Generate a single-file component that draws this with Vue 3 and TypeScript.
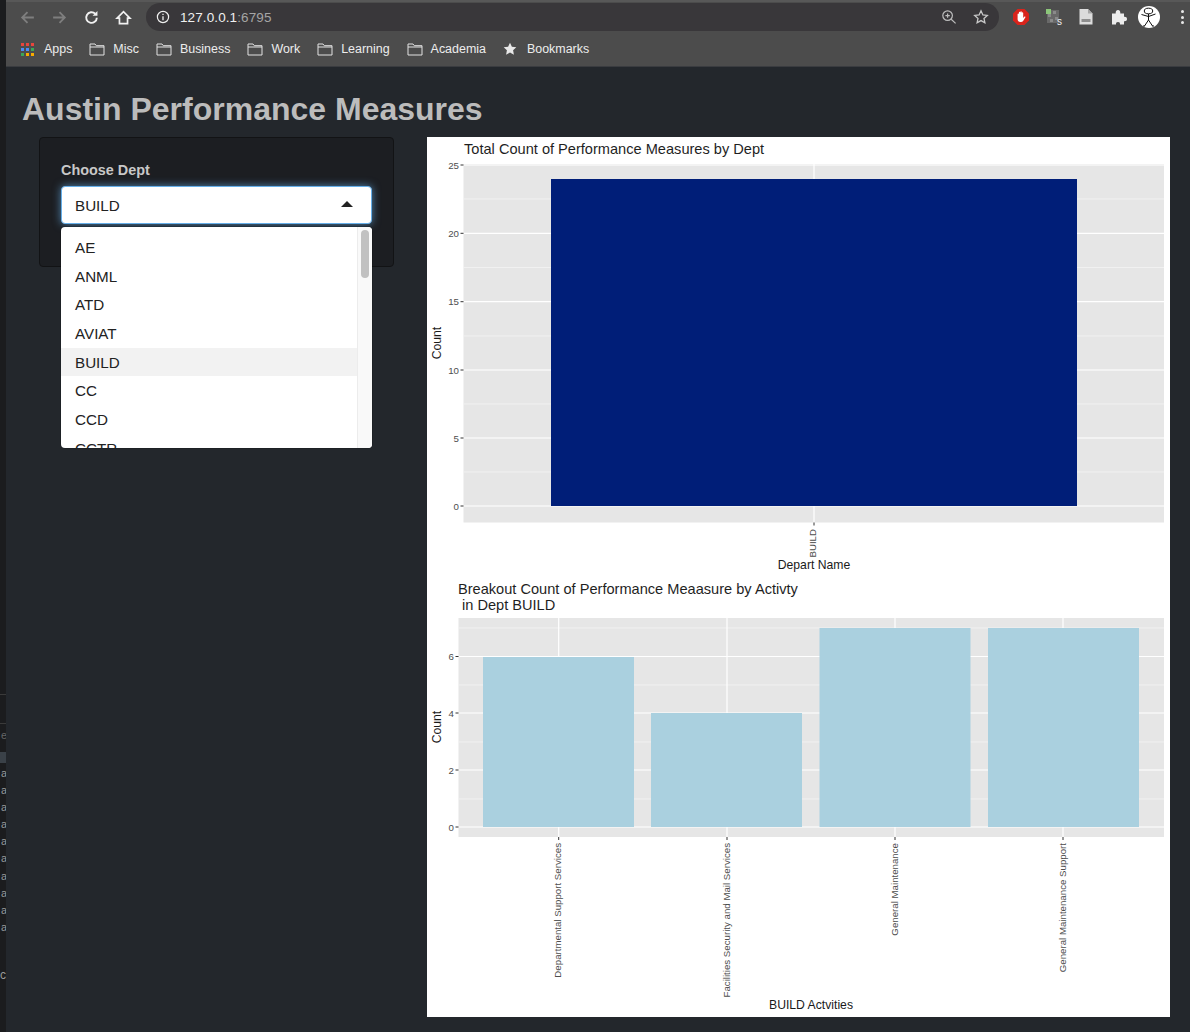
<script setup lang="ts">
const bookmarks = ['Misc', 'Business', 'Work', 'Learning', 'Academia']
const options = ['AE', 'ANML', 'ATD', 'AVIAT', 'BUILD', 'CC', 'CCD', 'CCTR']
const appColors = ['#e8453c', '#e8453c', '#e8453c', '#4c8bf5', '#4c8bf5', '#3aa757', '#3aa757', '#f9ab00', '#f9ab00']
const edgeRows = ['a', 'a', 'a', 'a', 'a', 'a', 'a', 'a', 'a', 'a']

const topMajor = [
  { y: 165, label: '25' },
  { y: 233.3, label: '20' },
  { y: 301.7, label: '15' },
  { y: 370, label: '10' },
  { y: 438, label: '5' },
  { y: 506, label: '0' },
]
const topMinor = [199, 267.5, 336, 404, 472]

const bottomMajor = [
  { y: 656.5, label: '6' },
  { y: 713, label: '4' },
  { y: 770, label: '2' },
  { y: 827, label: '0' },
]
const bottomMinor = [628, 685, 742, 799]
const activities = [
  { x: 483, top: 657, center: 558.7, label: 'Departmental Support Services' },
  { x: 651, top: 713, center: 727, label: 'Facilities Security and Mail Services' },
  { x: 819.5, top: 628, center: 895, label: 'General Maintenance' },
  { x: 988, top: 628, center: 1063, label: 'General Maintenance Support' },
]
</script>

<template>
  <div class="screen">
    <div class="edge">
      <div class="edge-line"></div>
      <span class="edge-e">e</span>
      <div class="edge-band"></div>
      <span v-for="(row, i) in edgeRows" :key="i" class="edge-row">{{ row }}</span>
      <span class="edge-c">c</span>
    </div>

    <div class="window">
      <header class="toolbar">
        <div class="nav">
          <svg class="nav-icon" viewBox="0 0 16 16"><path d="M14 8H3M8 3 3 8l5 5" fill="none" stroke="#7e7e7e" stroke-width="1.7" /></svg>
          <svg class="nav-icon" viewBox="0 0 16 16"><path d="M2 8h11M8 3l5 5-5 5" fill="none" stroke="#7e7e7e" stroke-width="1.7" /></svg>
          <svg class="nav-icon" viewBox="0 0 16 16"><path d="M13 8.2a5 5 0 1 1-1.5-3.7" fill="none" stroke="#f1f1f1" stroke-width="1.8" /><path d="M13.6 1.8v4.6H9z" fill="#f1f1f1" /></svg>
          <svg class="nav-icon" viewBox="0 0 16 16"><path d="M2 8.500 8 2.500l6 6h-2.200v5.300H4.200V8.500z" fill="none" stroke="#f1f1f1" stroke-width="1.600" stroke-linejoin="miter" /></svg>
        </div>
        <div class="omnibox">
          <svg class="info" viewBox="0 0 14 14"><circle cx="7" cy="7" r="5.600" fill="none" stroke="#f0f0f0" stroke-width="1.200" /><path d="M7 6.200v4M7 3.800v1.300" stroke="#f0f0f0" stroke-width="1.300" /></svg>
          <span class="url">127.0.0.1<span class="port">:6795</span></span>
          <svg class="zoom-icon" viewBox="0 0 16 16"><circle cx="6.600" cy="6.600" r="4.800" fill="none" stroke="#bdbdbd" stroke-width="1.200" /><path d="m10.200 10.200 4.400 4.200M4.400 6.600h4.400M6.600 4.400v4.400" stroke="#bdbdbd" stroke-width="1.200" /></svg>
          <svg class="star-icon" viewBox="0 0 16 16"><path d="m8 1.800 1.900 4.100 4.400.5-3.300 3 .9 4.400L8 11.600l-3.900 2.200.9-4.400-3.300-3 4.400-.5z" fill="none" stroke="#c9c9c9" stroke-width="1.300" /></svg>
        </div>
        <div class="extensions">
          <svg class="ext" viewBox="0 0 18 18"><path d="M5.500 1h7L17 5.500v7L12.500 17h-7L1 12.500v-7z" fill="#d9241c" /><path d="M5.600 9V6.200c0-1 1.300-1 1.300 0V4.600c0-1 1.400-1 1.400 0v-.5c0-1 1.500-1 1.500 0v.8c0-1 1.400-1 1.400 0v5l1-1.200c.7-.7 1.600 0 1.100.8l-2.200 3.400c-.5.7-1.200 1.100-2.100 1.100H8.300c-1.600 0-2.700-1.200-2.700-2.800z" fill="#fff" /></svg>
          <svg class="ext" viewBox="0 0 18 18">
            <rect x="2" y="2" width="12" height="13" fill="#696969" />
            <path d="M3 6h3v3H3zM8 3h3v3H8zM10 9h3v3h-3zM5 11h3v3H5z" fill="#8a8a8a" />
            <rect x="1" y="1" width="5" height="5" fill="#8cc67a" />
            <text x="12" y="17" class="ext-s">s</text>
          </svg>
          <svg class="ext" viewBox="0 0 18 18"><path d="M2.500 1h8.500l4.500 4.500V16.500h-13z" fill="#dcdcdc" /><path d="M11 1v4.500h4.500z" fill="#a8a8a8" /><rect x="4.500" y="11" width="9" height="3" fill="#8e8e8e" /></svg>
          <svg class="ext" viewBox="0 0 18 18"><path d="M2 5.500h3.700C5.500 3.500 6.300 2 8 2s2.500 1.500 2.300 3.500H14v3.300c1.900-.2 3 .6 3 2.200s-1.100 2.400-3 2.200v3.300h-4c.2-1.700-.6-2.500-2-2.500s-2.200.8-2 2.500H2z" fill="#ececec" /></svg>
          <svg class="avatar" viewBox="0 0 22 22">
            <circle cx="11" cy="11" r="11" fill="#fff" />
            <ellipse cx="10.500" cy="5" rx="4.200" ry="2.800" fill="none" stroke="#111" stroke-width="1" />
            <path d="M10.500 8v6M3.500 8.500l7 2 7-2.500M10.500 14l-4 6M10.500 14l4 6M7 20h-2M14 20h2" fill="none" stroke="#111" stroke-width="1" />
          </svg>
          <div class="dots"><i></i><i></i><i></i></div>
        </div>
      </header>

      <nav class="bookmarks">
        <div class="bookmark first">
          <div class="apps"><i v-for="(color, i) in appColors" :key="i" :style="{ background: color }"></i></div>
          <span>Apps</span>
        </div>
        <div v-for="name in bookmarks" :key="name" class="bookmark">
          <svg class="folder" viewBox="0 0 16 14"><path d="M1 2h5l1.300 1.700H15V13H1zM1 5h14" fill="none" stroke="#e2e2e2" stroke-width="1" /></svg>
          <span>{{ name }}</span>
        </div>
        <div class="bookmark last">
          <svg class="bm-star" viewBox="0 0 14 14"><path d="m7 .8 1.900 4 4.400.5-3.200 3 .8 4.400L7 10.600l-3.900 2.100.8-4.400-3.200-3 4.400-.5z" fill="#e8e8e8" /></svg>
          <span>Bookmarks</span>
        </div>
      </nav>

      <main class="page">
        <h1 class="title">Austin Performance Measures</h1>
        <div class="content">
          <aside class="well">
            <label class="field-label">Choose Dept</label>
            <div class="select">
              <div class="select-input">
                <span>BUILD</span>
                <i class="caret"></i>
              </div>
              <div class="dropdown">
                <div class="options">
                  <div v-for="opt in options" :key="opt" class="option" :class="{ active: opt === 'BUILD' }">{{ opt }}</div>
                </div>
                <div class="scrollbar"><div class="thumb"></div></div>
              </div>
            </div>
          </aside>

          <section class="plots">
            <svg class="plot-svg" viewBox="427 137 743 880">
              <text x="464" y="154" class="plot-title">Total Count of Performance Measures by Dept</text>
              <rect x="463.500" y="164" width="700.500" height="358.500" fill="#e6e6e6" />
              <line v-for="y in topMinor" :key="y" x1="463.500" x2="1164" :y1="y" :y2="y" class="grid-minor" />
              <line v-for="t in topMajor" :key="t.label" x1="463.500" x2="1164" :y1="t.y" :y2="t.y" class="grid" />
              <line x1="814" x2="814" y1="164" y2="522.500" class="grid" />
              <rect x="551" y="179" width="526" height="327" fill="#001e78" />
              <template v-for="t in topMajor" :key="t.label">
                <line x1="460.500" x2="463.500" :y1="t.y" :y2="t.y" class="tick" />
                <text x="459" :y="t.y + 3.500" class="tick-label" text-anchor="end">{{ t.label }}</text>
              </template>
              <line x1="814" x2="814" y1="522.500" y2="525.500" class="tick" />
              <text class="tick-label" text-anchor="end" transform="translate(815.500 529) rotate(-90)">BUILD</text>
              <text x="814" y="569" class="axis-label" text-anchor="middle">Depart Name</text>
              <text class="axis-label" text-anchor="middle" transform="translate(441 343) rotate(-90)">Count</text>

              <text x="458" y="594" class="plot-title">Breakout Count of Performance Meaasure by Activty</text>
              <text x="462" y="610" class="plot-title">in Dept BUILD</text>
              <rect x="458.500" y="618" width="705.500" height="219" fill="#e6e6e6" />
              <line v-for="y in bottomMinor" :key="y" x1="458.500" x2="1164" :y1="y" :y2="y" class="grid-minor" />
              <line v-for="t in bottomMajor" :key="t.label" x1="458.500" x2="1164" :y1="t.y" :y2="t.y" class="grid" />
              <template v-for="a in activities" :key="a.label">
                <line :x1="a.center" :x2="a.center" y1="618" y2="837" class="grid" />
                <rect :x="a.x" :y="a.top" width="151" :height="827 - a.top" fill="#aad0df" />
                <line :x1="a.center" :x2="a.center" y1="837" y2="840" class="tick" />
                <text class="tick-label" text-anchor="end" :transform="`translate(${a.center + 2.5} 843) rotate(-90)`">{{ a.label }}</text>
              </template>
              <template v-for="t in bottomMajor" :key="t.label">
                <line x1="455.500" x2="458.500" :y1="t.y" :y2="t.y" class="tick" />
                <text x="454" :y="t.y + 3.500" class="tick-label" text-anchor="end">{{ t.label }}</text>
              </template>
              <text x="811" y="1009" class="axis-label" text-anchor="middle">BUILD Actvities</text>
              <text class="axis-label" text-anchor="middle" transform="translate(441 727) rotate(-90)">Count</text>
            </svg>
          </section>
        </div>
      </main>
    </div>
  </div>
</template>

<style>
html, body {
  margin: 0;
  background: #23272c;
  overflow: hidden;
}
</style>

<style scoped>
.screen {
  display: flex;
  width: 1190px;
  height: 1032px;
  overflow: hidden;
  font-family: "Liberation Sans", Arial, sans-serif;
}

/* sliver of the window behind */
.edge {
  width: 6px;
  flex-shrink: 0;
  background: #1b1c1e;
  padding-top: 694px;
  box-sizing: border-box;
  overflow: hidden;
  font-size: 11px;
  color: #9a9a9a;
  display: flex;
  flex-direction: column;
  align-items: flex-start;
}
.edge-line {
  width: 6px;
  height: 30px;
  border-top: 1px solid #3a3a3a;
  border-bottom: 1px solid #3a3a3a;
  box-sizing: border-box;
  flex-shrink: 0;
}
.edge-e { height: 22px; line-height: 22px; color: #666; flex-shrink: 0; margin-left: 1px; }
.edge-band { width: 6px; height: 11px; background: #3a4148; margin: 6px 0 2px; flex-shrink: 0; }
.edge-row { height: 17.1px; line-height: 17px; flex-shrink: 0; margin-left: 1px; }
.edge-c { margin-top: 32px; font-size: 12px; line-height: 14px; flex-shrink: 0; }

.window {
  flex: 1;
  min-width: 0;
  display: flex;
  flex-direction: column;
  background: #23272c;
}

/* BROWSER CHROME */
.toolbar {
  height: 36px;
  background: #4c4c4c;
  display: flex;
  align-items: center;
  padding: 0 0 4px 13px;
  box-sizing: border-box;
  border-top: 2px solid #585858;
}
.nav { display: flex; gap: 15px; width: 127px; flex-shrink: 0; }
.nav-icon { width: 17px; height: 17px; }
.omnibox {
  width: 853px;
  height: 28px;
  background: #39373a;
  border-radius: 14px;
  display: flex;
  align-items: center;
  padding: 0 10px;
  box-sizing: border-box;
  flex-shrink: 0;
}
.info { width: 14px; height: 14px; margin-right: 10px; }
.url { font-size: 13.5px; color: #f0f0f0; flex: 1; letter-spacing: 0.1px; }
.port { color: #a5a5a5; }
.zoom-icon { width: 16px; height: 16px; margin-right: 16px; }
.star-icon { width: 16px; height: 16px; }
.extensions { display: flex; align-items: center; margin-left: 13px; gap: 14.5px; }
.ext { width: 18px; height: 18px; flex-shrink: 0; }
.ext-s { font-size: 10px; fill: #f0f0f0; }
.avatar { width: 22px; height: 22px; margin-left: -4px; flex-shrink: 0; }
.dots { display: flex; flex-direction: column; gap: 2.5px; margin-left: 6px; }
.dots i { display: block; width: 3px; height: 3px; border-radius: 50%; background: #e8e8e8; }

.bookmarks {
  height: 31px;
  background: #4c4c4c;
  border-bottom: 1px solid #3a3c40;
  box-sizing: border-box;
  display: flex;
  align-items: center;
  padding: 0 0 4px 15px;
  gap: 17px;
  font-size: 12.45px;
  color: #ececec;
}
.bookmark { display: flex; align-items: center; gap: 8px; }
.bookmark.first { gap: 10px; }
.bookmark.last { gap: 10px; }
.apps { display: grid; grid-template-columns: repeat(3, 3px); gap: 2px; }
.apps i { display: block; width: 3px; height: 3px; }
.folder { width: 16px; height: 14px; }
.bm-star { width: 14px; height: 14px; }

/* PAGE */
.page { flex: 1; min-height: 0; }
.title {
  margin: 0;
  padding: 21px 0 0 16px;
  height: 70px;
  box-sizing: border-box;
  font-size: 32px;
  line-height: 42px;
  font-weight: 700;
  color: #bcbcbc;
}
.content { display: flex; align-items: flex-start; padding-left: 33px; gap: 33px; }

.well {
  width: 355px;
  height: 130px;
  background: #1c1e22;
  border: 1px solid #121315;
  border-radius: 4px;
  box-sizing: border-box;
  padding: 23px 21px 0;
  flex-shrink: 0;
}
.field-label {
  display: block;
  font-size: 14.4px;
  line-height: 18px;
  font-weight: 700;
  color: #c8c8c8;
  margin-bottom: 7px;
}
.select { position: relative; }
.select-input {
  height: 38px;
  background: #fff;
  border: 1px solid #66afe9;
  border-radius: 4px;
  box-shadow: 0 0 8px rgba(102, 175, 233, 0.7);
  box-sizing: border-box;
  padding: 0 18px 0 13px;
  display: flex;
  align-items: center;
  justify-content: space-between;
  font-size: 15.2px;
  color: #222;
}
.caret {
  width: 0;
  height: 0;
  border-left: 6px solid transparent;
  border-right: 6px solid transparent;
  border-bottom: 6px solid #222;
  margin-top: -3px;
}
.dropdown {
  position: absolute;
  top: 40.5px;
  left: 0;
  right: 0;
  height: 221px;
  background: #fff;
  border-radius: 4px;
  overflow: hidden;
  box-shadow: 0 0 0 1px rgba(0, 0, 0, 0.15);
  display: flex;
  font-size: 15.2px;
  color: #222;
}
.options { flex: 1; padding-top: 6.5px; }
.option {
  height: 28.7px;
  box-sizing: border-box;
  padding: 1px 0 0 14px;
  line-height: 27.7px;
}
.option.active { background: #f2f2f2; }
.scrollbar {
  width: 15px;
  background: #f9f9f9;
  border-left: 1px solid #ececec;
  box-sizing: border-box;
  padding: 3px 3px 0 3px;
}
.thumb { height: 48px; background: #c1c1c1; border-radius: 4px; }

/* PLOTS */
.plots { width: 743px; height: 880px; background: #fff; flex-shrink: 0; }
.plot-svg { display: block; width: 743px; height: 880px; }
.plot-title { font-size: 14.6px; fill: #1f1f1f; }
.axis-label { font-size: 12.2px; fill: #1a1a1a; }
.tick-label { font-size: 9.7px; fill: #4d4d4d; }
.grid { stroke: #fff; stroke-width: 1.2; }
.grid-minor { stroke: #f4f4f4; stroke-width: 0.8; }
.tick { stroke: #333; stroke-width: 1; }
</style>
